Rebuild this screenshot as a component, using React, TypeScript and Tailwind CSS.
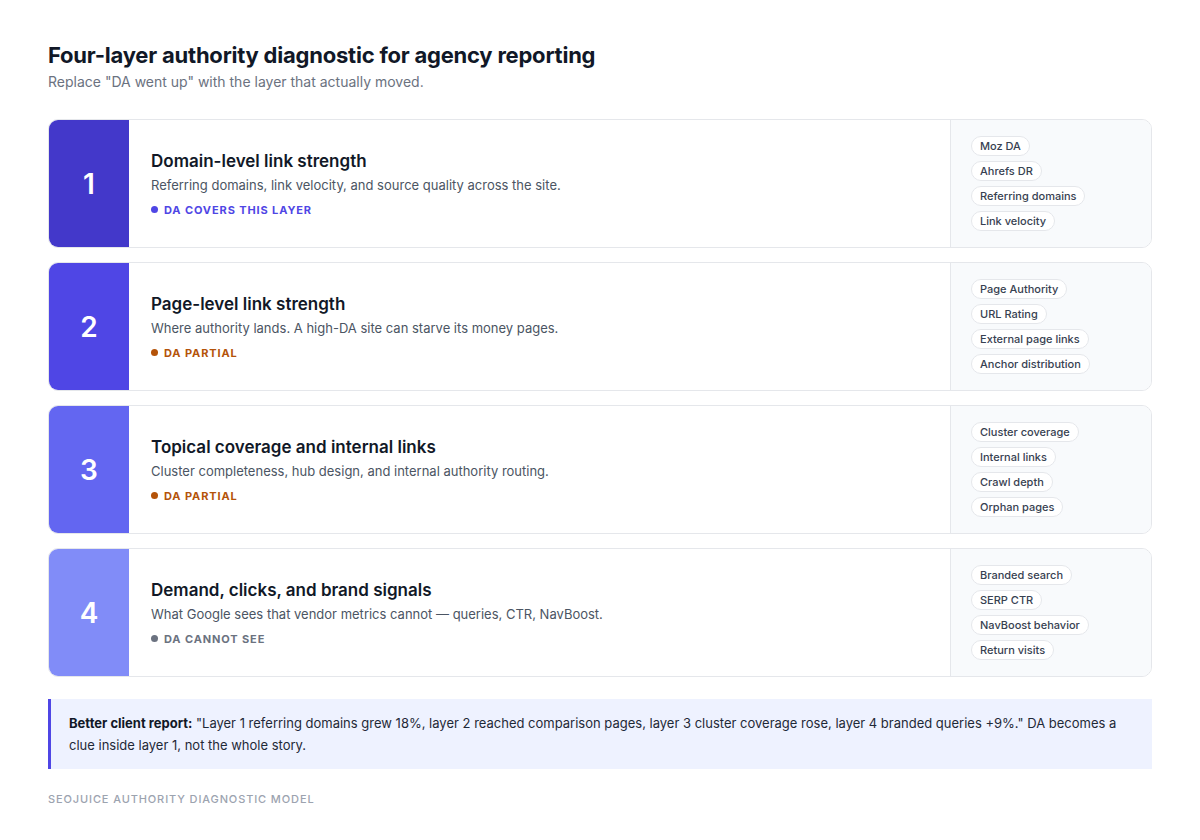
const layers = [
  {
    n: "1",
    bg: "bg-[#4338ca]",
    title: "Domain-level link strength",
    desc: "Referring domains, link velocity, and source quality across the site.",
    tag: "DA covers this layer",
    tagColor: "text-[#4f46e5]",
    dot: "bg-[#4f46e5]",
    chips: ["Moz DA", "Ahrefs DR", "Referring domains", "Link velocity"],
  },
  {
    n: "2",
    bg: "bg-[#4f46e5]",
    title: "Page-level link strength",
    desc: "Where authority lands. A high-DA site can starve its money pages.",
    tag: "DA partial",
    tagColor: "text-[#b45309]",
    dot: "bg-[#b45309]",
    chips: ["Page Authority", "URL Rating", "External page links", "Anchor distribution"],
  },
  {
    n: "3",
    bg: "bg-[#6366f1]",
    title: "Topical coverage and internal links",
    desc: "Cluster completeness, hub design, and internal authority routing.",
    tag: "DA partial",
    tagColor: "text-[#b45309]",
    dot: "bg-[#b45309]",
    chips: ["Cluster coverage", "Internal links", "Crawl depth", "Orphan pages"],
  },
  {
    n: "4",
    bg: "bg-[#818cf8]",
    title: "Demand, clicks, and brand signals",
    desc: "What Google sees that vendor metrics cannot — queries, CTR, NavBoost.",
    tag: "DA cannot see",
    tagColor: "text-[#6b7280]",
    dot: "bg-[#6b7280]",
    chips: ["Branded search", "SERP CTR", "NavBoost behavior", "Return visits"],
  },
];

export default function App() {
  return (
    <div className="min-h-[840px] bg-white px-12 pt-[40px] font-[Inter,sans-serif] text-[#111827]">
      <h1 className="text-[22px] font-bold leading-[30px] tracking-[-0.01em]">
        Four-layer authority diagnostic for agency reporting
      </h1>
      <p className="mt-[1px] text-[14px] text-[#6b7280]">Replace "DA went up" with the layer that actually moved.</p>

      <div className="mt-[27px] flex flex-col gap-[14px]">
        {layers.map((l) => (
          <div key={l.n} className="flex h-[129px] overflow-hidden rounded-[10px] border border-[#e5e7eb]">
            <div className={`flex w-[80px] shrink-0 items-center justify-center text-[28px] font-semibold text-white ${l.bg}`}>
              {l.n}
            </div>
            <div className="flex flex-1 flex-col justify-center pl-[22px]">
              <div className="text-[17px] font-semibold leading-6">{l.title}</div>
              <div className="mt-[3px] text-[13px] text-[#4b5563]">{l.desc}</div>
              <div className={`mt-[6px] flex items-center gap-[6px] text-[11px] font-bold uppercase tracking-[0.08em] ${l.tagColor}`}>
                <span className={`h-[7px] w-[7px] rounded-full ${l.dot}`} />
                {l.tag}
              </div>
            </div>
            <div className="flex w-[201px] shrink-0 flex-col items-start justify-center gap-[5px] border-l border-[#e5e7eb] bg-[#f8fafc] pl-[20px]">
              {l.chips.map((c) => (
                <span
                  key={c}
                  className="rounded-full border border-[#e5e7eb] bg-white px-[8px] py-[1px] text-[11px] font-medium leading-[16px] text-[#374151]"
                >
                  {c}
                </span>
              ))}
            </div>
          </div>
        ))}
      </div>

      <div className="mt-[22px] border-l-[3px] border-[#4f46e5] bg-[#eef2ff] px-[18px] py-[13px] text-[13px] leading-[22px] text-[#1f2937]">
        <b className="font-bold text-[#111827]">Better client report:</b> "Layer 1 referring domains grew 18%, layer 2 reached
        comparison pages, layer 3 cluster coverage rose, layer 4 branded queries +9%." DA becomes a clue inside layer 1, not
        the whole story.
      </div>

      <div className="mt-[22px] text-[11px] font-medium uppercase tracking-[0.08em] text-[#9ca3af]">
        SEOJuice authority diagnostic model
      </div>
    </div>
  );
}
